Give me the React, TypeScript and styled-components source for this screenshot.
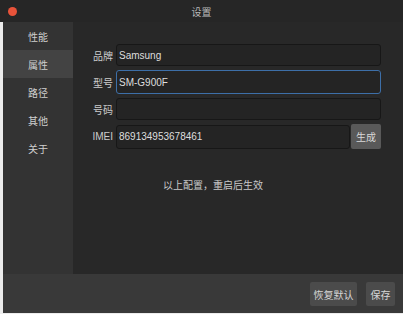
import React, { useState } from "react";
import styled, { createGlobalStyle } from "styled-components";

const GlobalStyle = createGlobalStyle`
  html, body {
    margin: 0;
    padding: 0;
    background: #ececec;
  }
  body {
    font-family: "Liberation Sans", "Noto Sans CJK SC", sans-serif;
    font-size: 10px;
  }
`;

const Frame = styled.div`
  width: 403px;
  height: 314px;
  display: flex;
  flex-direction: column;
  background: #ececec;
  overflow: hidden;
`;

const TitleBar = styled.div`
  height: 22px;
  flex-shrink: 0;
  background: #262626;
  position: relative;
  display: flex;
  align-items: center;
  justify-content: center;
  color: #b8b8b8;
  font-size: 10px;
`;

const CloseDot = styled.span`
  position: absolute;
  left: 8px;
  top: 7px;
  width: 9px;
  height: 9px;
  border-radius: 50%;
  background: #e8533a;
`;

const Window = styled.div`
  margin-left: 3px;
  height: 291px;
  display: flex;
  flex-direction: column;
`;

const Body = styled.div`
  flex: 1;
  display: flex;
`;

const Sidebar = styled.div`
  width: 70px;
  background: #333333;
  display: flex;
  flex-direction: column;
`;

const NavItem = styled.div<{ $active?: boolean }>`
  height: 28px;
  display: flex;
  align-items: center;
  justify-content: center;
  color: #cfcfcf;
  font-size: 10px;
  background: ${(p) => (p.$active ? "#434343" : "transparent")};
  cursor: pointer;
`;

const Panel = styled.div`
  flex: 1;
  background: #282828;
  padding: 22px 22px 0 0;
  display: flex;
  flex-direction: column;
`;

const Row = styled.div`
  display: flex;
  align-items: center;
  margin-bottom: 4px;
`;

const Label = styled.label`
  width: 40px;
  text-align: right;
  padding-right: 3px;
  color: #cccccc;
  font-size: 10px;
  flex-shrink: 0;
`;

const TextInput = styled.input<{ $focused?: boolean }>`
  flex: 1;
  min-width: 0;
  height: ${(p) => (p.$focused ? "24px" : "22px")};
  box-sizing: border-box;
  border-radius: 3px;
  border: 1px solid ${(p) => (p.$focused ? "#3d6fa8" : "#171717")};
  background: #242424;
  color: #dedede;
  font-family: "Liberation Sans", sans-serif;
  font-size: 10px;
  padding: 0 2px;
  outline: none;
`;

const ImeiInput = styled(TextInput)`
  height: 24px;
`;

const SmallButton = styled.button`
  width: 30px;
  height: 25px;
  margin-left: 1px;
  border: none;
  border-radius: 2px;
  background: #595959;
  color: #d8d8d8;
  font-family: "Noto Sans CJK SC", sans-serif;
  font-size: 10px;
  padding: 0;
`;

const Note = styled.div`
  margin-top: 24px;
  padding-left: 90px;
  color: #c8c8c8;
  font-size: 10px;
`;

const Footer = styled.div`
  height: 39px;
  background: #393939;
  display: flex;
  justify-content: flex-end;
  align-items: flex-start;
  padding: 8px 8px 0 0;
  box-sizing: border-box;
  gap: 9px;
`;

const FooterButton = styled.button<{ $w: number }>`
  width: ${(p) => p.$w}px;
  height: 24px;
  border: none;
  border-radius: 2px;
  background: #4b4b4b;
  color: #d6d6d6;
  font-family: "Noto Sans CJK SC", sans-serif;
  font-size: 10px;
  padding: 0;
`;

const navs = ["性能", "属性", "路径", "其他", "关于"];

const App: React.FC = () => {
  const [brand, setBrand] = useState("Samsung");
  const [model, setModel] = useState("SM-G900F");
  const [number, setNumber] = useState("");
  const [imei, setImei] = useState("869134953678461");

  return (
    <>
      <GlobalStyle />
      <Frame>
        <TitleBar>
          <CloseDot />
          设置
        </TitleBar>
        <Window>
          <Body>
            <Sidebar>
              {navs.map((n) => (
                <NavItem key={n} $active={n === "属性"}>
                  {n}
                </NavItem>
              ))}
            </Sidebar>
            <Panel>
              <Row>
                <Label>品牌</Label>
                <TextInput value={brand} onChange={(e) => setBrand(e.target.value)} />
              </Row>
              <Row>
                <Label>型号</Label>
                <TextInput $focused value={model} onChange={(e) => setModel(e.target.value)} />
              </Row>
              <Row>
                <Label>号码</Label>
                <TextInput value={number} onChange={(e) => setNumber(e.target.value)} />
              </Row>
              <Row>
                <Label>IMEI</Label>
                <ImeiInput value={imei} onChange={(e) => setImei(e.target.value)} />
                <SmallButton>生成</SmallButton>
              </Row>
              <Note>以上配置，重启后生效</Note>
            </Panel>
          </Body>
          <Footer>
            <FooterButton $w={47}>恢复默认</FooterButton>
            <FooterButton $w={29}>保存</FooterButton>
          </Footer>
        </Window>
      </Frame>
    </>
  );
};

export default App;
